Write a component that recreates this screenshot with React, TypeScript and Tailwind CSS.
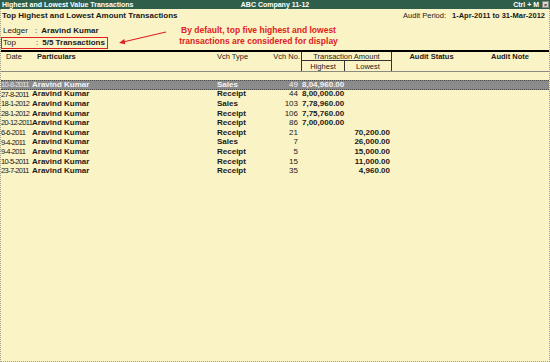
import React from "react";

type Row = { date: string; type: string; no: string; high?: string; low?: string; sel?: boolean };

const rows: Row[] = [
  { date: "10-8-2011", type: "Sales", no: "49", high: "8,04,960.00", sel: true },
  { date: "27-8-2011", type: "Receipt", no: "44", high: "8,00,000.00" },
  { date: "18-1-2012", type: "Sales", no: "103", high: "7,78,960.00" },
  { date: "28-1-2012", type: "Receipt", no: "106", high: "7,75,760.00" },
  { date: "20-12-2011", type: "Receipt", no: "86", high: "7,00,000.00" },
  { date: "6-6-2011", type: "Receipt", no: "21", low: "70,200.00" },
  { date: "9-4-2011", type: "Sales", no: "7", low: "26,000.00" },
  { date: "9-4-2011", type: "Receipt", no: "5", low: "15,000.00" },
  { date: "10-5-2011", type: "Receipt", no: "15", low: "11,000.00" },
  { date: "23-7-2011", type: "Receipt", no: "35", low: "4,960.00" },
];

const cols = "grid grid-cols-[31px_185px_52px_33px_43px_47px_79px_1fr]";

export default function App() {
  return (
    <div className="w-[550px] h-[362px] flex flex-col bg-[#faf3c5] overflow-hidden font-['Liberation_Sans',Arial,sans-serif] text-[#1a1a1a]">
      {/* title bar */}
      <div className="h-[9px] bg-[#2f5f4b] grid grid-cols-[1fr_auto_1fr] items-center text-white font-bold text-[7px] leading-none">
        <span className="pl-[2px] whitespace-nowrap">Highest and Lowest Value Transactions</span>
        <span className="whitespace-nowrap">ABC Company 11-12</span>
        <div className="flex items-center justify-end pr-[1px]">
          <span className="whitespace-nowrap">Ctrl + M</span>
          <span className="ml-[3px] w-[7px] h-[7px] bg-[#dcdcd4] border border-[#8a8a80] text-[#333] text-[6px] leading-none flex items-center justify-center">×</span>
        </div>
      </div>

      {/* body */}
      <div className="relative flex-1 flex flex-col border-l border-r border-b border-dotted border-[#a3a08a]">
        <div className="h-[14px] flex items-center justify-between pl-[1px] pr-[4px]">
          <span className="text-[8px] font-bold whitespace-nowrap">Top Highest and Lowest Amount Transactions</span>
          <span className="text-[7.5px] whitespace-nowrap">
            Audit Period:<span className="ml-[6px] font-bold">1-Apr-2011 to 31-Mar-2012</span>
          </span>
        </div>
        <div className="mt-[2px] h-[12px] flex items-center text-[8px] pl-[2px]">
          <span className="w-[32px]">Ledger</span>
          <span>:</span>
          <span className="ml-[4px] font-bold">Aravind Kumar</span>
        </div>
        <div className="h-[12px] w-[107px] flex items-center text-[8px] pl-[1px] border border-[#e02020]">
          <span className="w-[33px]">Top</span>
          <span>:</span>
          <span className="ml-[4px] font-bold">5/5 Transactions</span>
        </div>

        {/* column header */}
        <div className={`${cols} grid-rows-[9px_10px] mt-[1px] border-t-2 border-black border-b border-b-[#8c8a7c] text-[7.5px] leading-none`}>
          <div className="row-span-2 pl-[5px] pt-[1px]">Date</div>
          <div className="row-span-2 pl-[5px] pt-[1px] font-bold">Particulars</div>
          <div className="row-span-2 pt-[1px]">Vch Type</div>
          <div className="row-span-2 pt-[1px] text-right pr-[1px] border-r border-[#333]">Vch No.</div>
          <div className="col-span-2 pt-[1px] text-center border-b border-r border-[#333]">Transaction Amount</div>
          <div className="row-span-2 pt-[1px] text-center font-bold">Audit Status</div>
          <div className="row-span-2 pt-[1px] text-center font-bold">Audit Note</div>
          <div className="pt-[2px] text-center border-r border-[#333]">Highest</div>
          <div className="pt-[2px] text-center border-r border-[#333]">Lowest</div>
        </div>

        <div className="h-[8px]" />

        {rows.map((r, i) => (
          <div
            key={i}
            className={`${cols} h-[9.6px] items-center leading-none text-[8px] ${
              r.sel ? "bg-[#8b8b8b] text-[#f4f4f4] border-y border-dotted border-[#4a4a4a]" : ""
            }`}
          >
            <span className={`text-[7.5px] tracking-[-0.65px] whitespace-nowrap ${r.sel ? "text-[#e4e4e4]" : ""}`}>{r.date}</span>
            <span className="font-bold whitespace-nowrap">Aravind Kumar</span>
            <span className="font-bold">{r.type}</span>
            <span className="text-right pr-[4px]">{r.no}</span>
            <span className="font-bold text-right pr-[5px] whitespace-nowrap">{r.high ?? ""}</span>
            <span className="font-bold text-right pr-[2px] whitespace-nowrap">{r.low ?? ""}</span>
            <span />
            <span />
          </div>
        ))}

        {/* annotation */}
        <div className="absolute left-[170px] top-[16px] w-[175px] text-center text-[8.5px] leading-[11px] font-bold text-[#e02020] whitespace-nowrap">
          By default, top five highest and lowest
          <br />
          transactions are considered for display
        </div>
        <svg className="absolute left-[110px] top-[18px]" width="60" height="20" viewBox="0 0 60 20">
          <line x1="55" y1="5" x2="12" y2="15" stroke="#e02020" strokeWidth="1.2" />
          <polygon points="8,16 14.4,17.3 13.2,11.9" fill="#e02020" />
        </svg>
      </div>
    </div>
  );
}
